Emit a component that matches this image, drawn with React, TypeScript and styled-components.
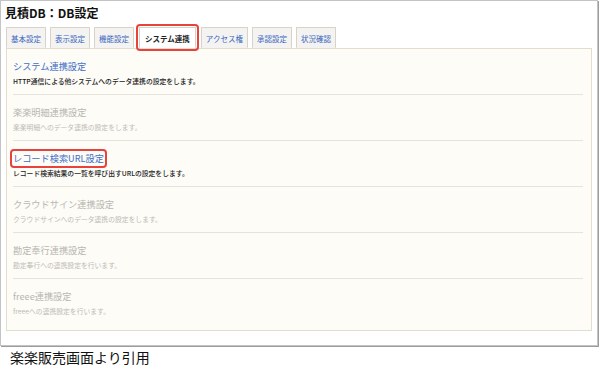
import React from "react";
import styled, { createGlobalStyle } from "styled-components";

const Global = createGlobalStyle`
  html, body { margin: 0; padding: 0; background: #ffffff; }
  body { font-family: "Noto Sans CJK JP", "Noto Sans", sans-serif; }
  * { box-sizing: border-box; }
`;

const Frame = styled.div`
  width: 598px;
  height: 346px;
  border: 1px solid #c4c4c4;
  box-shadow: 1px 1px 0 #9c9c9c;
  padding: 4px 6px 0 4px;
  background: #fff;
`;

const Title = styled.h1`
  margin: 0;
  font-size: 12px;
  line-height: 16px;
  font-weight: 700;
  color: #111;
`;

const Tabs = styled.div`
  display: flex;
  gap: 4px;
  margin-top: 6px;
  padding-left: 1px;
  height: 21px;
  align-items: flex-end;
`;

const Tab = styled.div<{ $active?: boolean }>`
  height: 21px;
  display: flex;
  align-items: center;
  font-size: 7.5px;
  color: ${(p) => (p.$active ? "#222" : "#3a68c0")};
  font-weight: ${(p) => (p.$active ? 700 : 400)};
  background: ${(p) => (p.$active ? "#fff" : "#f4f3f1")};
  border: 1px solid #d8d3c4;
  border-bottom: none;
  white-space: nowrap;
  margin: ${(p) => (p.$active ? "0 1px" : "0")};
  padding: ${(p) => (p.$active ? "0 5px" : "0 4px")};
  outline: ${(p) => (p.$active ? "2px solid #e8423f" : "none")};
  outline-offset: 1px;
  border-radius: 1px;
`;

const Panel = styled.div`
  margin-left: 1px;
  width: 586px;
  height: 283px;
  border: 1px solid #e2ddcc;
  background: #fdfcf7;
  padding: 0 8px 0 6px;
`;

const Item = styled.div<{ $last?: boolean }>`
  padding: 11px 0 7px;
  border-bottom: ${(p) => (p.$last ? "none" : "1px solid #e6e3da")};
`;

const ItemTitle = styled.div<{ $on?: boolean; $mark?: boolean }>`
  font-size: 9.2px;
  line-height: 13px;
  height: 13px;
  color: ${(p) => (p.$on ? "#3f6fc6" : "#b9b7b1")};
  margin-bottom: 3px;
  span {
    display: inline-block;
    outline: ${(p) => (p.$mark ? "2px solid #e8423f" : "none")};
    outline-offset: 1px;
    border-radius: 1px;
  }
`;

const ItemDesc = styled.div<{ $on?: boolean }>`
  font-size: 6.8px;
  line-height: 11px;
  color: ${(p) => (p.$on ? "#1a1a1a" : "#bdbbb5")};
  font-weight: ${(p) => (p.$on ? 500 : 400)};
`;

const Caption = styled.div`
  margin: 3px 0 0 10px;
  font-size: 14px;
  line-height: 16px;
  color: #111;
`;

const tabs = ["基本設定", "表示設定", "機能設定", "システム連携", "アクセス権", "承認設定", "状況確認"];

const items = [
  { t: "システム連携設定", d: "HTTP通信による他システムへのデータ連携の設定をします。", on: true },
  { t: "楽楽明細連携設定", d: "楽楽明細へのデータ連携の設定をします。", on: false },
  { t: "レコード検索URL設定", d: "レコード検索結果の一覧を呼び出すURLの設定をします。", on: true, mark: true },
  { t: "クラウドサイン連携設定", d: "クラウドサインへのデータ連携の設定をします。", on: false },
  { t: "勘定奉行連携設定", d: "勘定奉行への連携設定を行います。", on: false },
  { t: "freee連携設定", d: "freeeへの連携設定を行います。", on: false },
];

export default function App() {
  return (
    <>
      <Global />
      <Frame>
        <Title>見積DB：DB設定</Title>
        <Tabs>
          {tabs.map((t) => (
            <Tab key={t} $active={t === "システム連携"}>
              {t}
            </Tab>
          ))}
        </Tabs>
        <Panel>
          {items.map((it, i) => (
            <Item key={it.t} $last={i === items.length - 1}>
              <ItemTitle $on={it.on} $mark={it.mark}>
                <span>{it.t}</span>
              </ItemTitle>
              <ItemDesc $on={it.on}>{it.d}</ItemDesc>
            </Item>
          ))}
        </Panel>
      </Frame>
      <Caption>楽楽販売画面より引用</Caption>
    </>
  );
}
